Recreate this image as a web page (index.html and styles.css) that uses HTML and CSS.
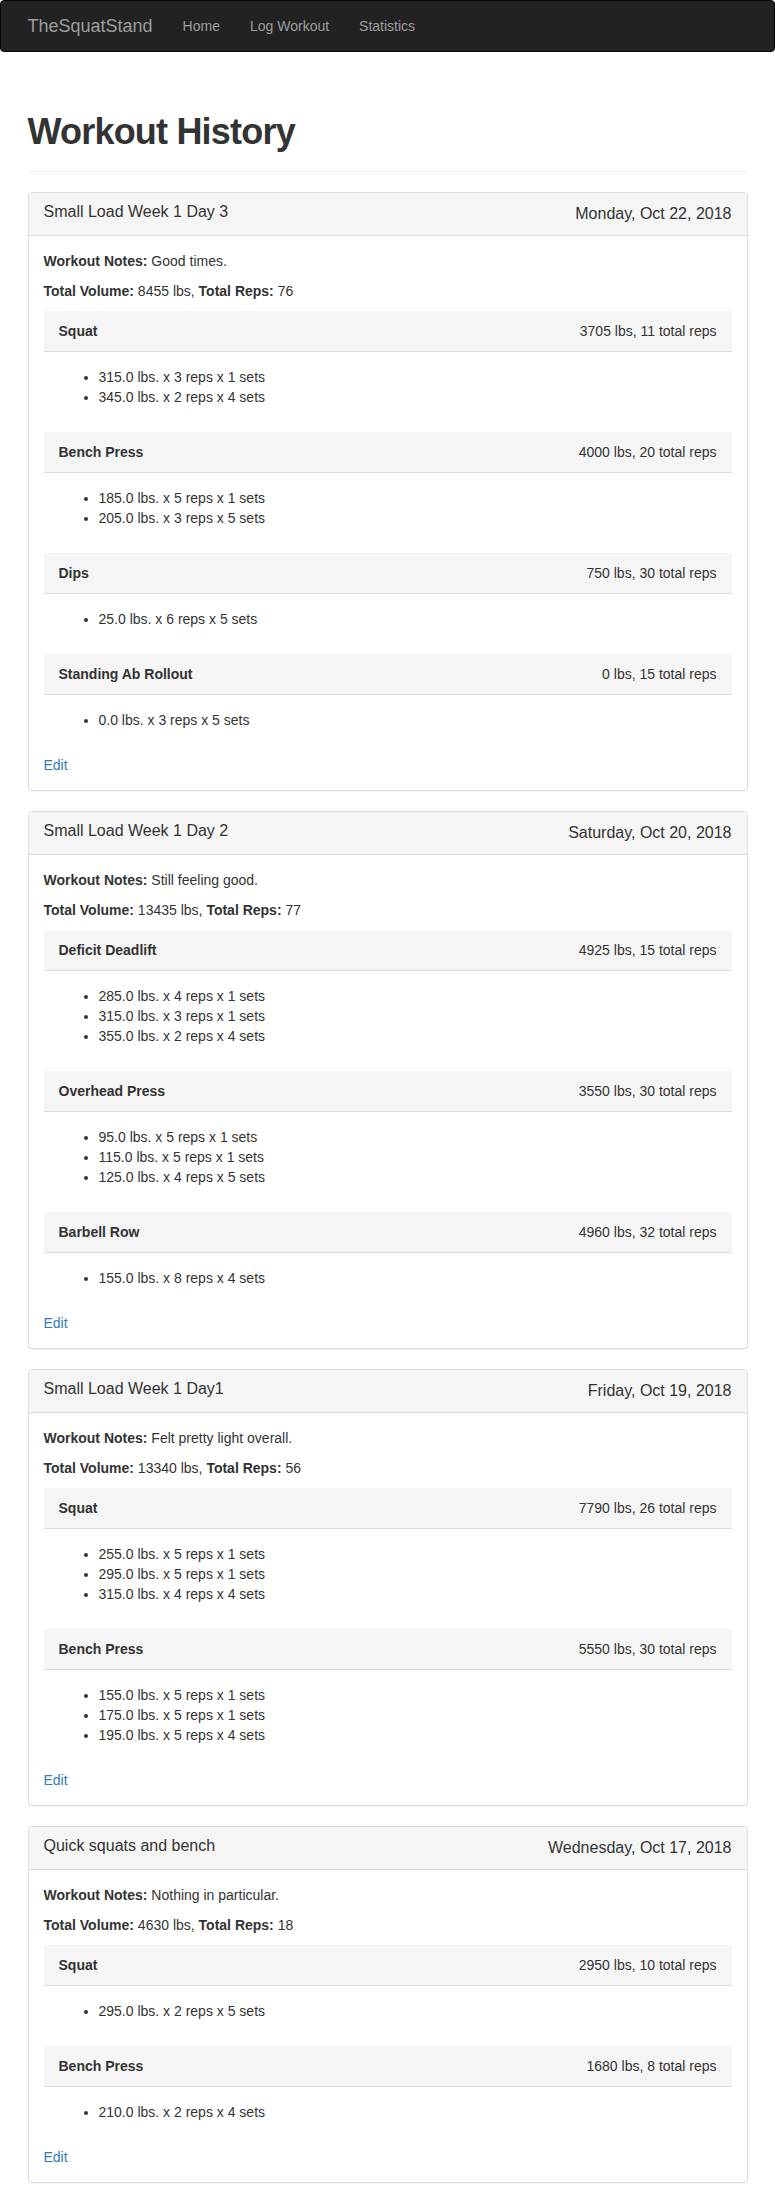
FILE: index.html
```html
<!DOCTYPE html>
<html lang="en">
<head>
<meta charset="utf-8">
<title>TheSquatStand - Workout History</title>
<link rel="stylesheet" href="styles.css">
</head>
<body>
<nav class="navbar">
  <div class="container nav-inner">
    <a class="brand" href="#">TheSquatStand</a>
    <ul class="nav-links">
      <li><a href="#">Home</a></li>
      <li><a href="#">Log Workout</a></li>
      <li><a href="#">Statistics</a></li>
    </ul>
  </div>
</nav>

<div class="container">
  <div class="page-header"><h1>Workout History</h1></div>

  <div class="panel">
    <div class="panel-heading"><h3 class="panel-title">Small Load Week 1 Day 3</h3><span class="panel-date">Monday, Oct 22, 2018</span></div>
    <div class="panel-body">
      <p><strong>Workout Notes:</strong> Good times.</p>
      <p><strong>Total Volume:</strong> 8455 lbs, <strong>Total Reps:</strong> 76</p>
      <div class="ex">
        <div class="ex-heading"><strong>Squat</strong><span>3705 lbs, 11 total reps</span></div>
        <div class="ex-body"><ul><li>315.0 lbs. x 3 reps x 1 sets</li><li>345.0 lbs. x 2 reps x 4 sets</li></ul></div>
      </div>
      <div class="ex">
        <div class="ex-heading"><strong>Bench Press</strong><span>4000 lbs, 20 total reps</span></div>
        <div class="ex-body"><ul><li>185.0 lbs. x 5 reps x 1 sets</li><li>205.0 lbs. x 3 reps x 5 sets</li></ul></div>
      </div>
      <div class="ex">
        <div class="ex-heading"><strong>Dips</strong><span>750 lbs, 30 total reps</span></div>
        <div class="ex-body"><ul><li>25.0 lbs. x 6 reps x 5 sets</li></ul></div>
      </div>
      <div class="ex">
        <div class="ex-heading"><strong>Standing Ab Rollout</strong><span>0 lbs, 15 total reps</span></div>
        <div class="ex-body"><ul><li>0.0 lbs. x 3 reps x 5 sets</li></ul></div>
      </div>
      <a class="edit" href="#">Edit</a>
    </div>
  </div>

  <div class="panel">
    <div class="panel-heading"><h3 class="panel-title">Small Load Week 1 Day 2</h3><span class="panel-date">Saturday, Oct 20, 2018</span></div>
    <div class="panel-body">
      <p><strong>Workout Notes:</strong> Still feeling good.</p>
      <p><strong>Total Volume:</strong> 13435 lbs, <strong>Total Reps:</strong> 77</p>
      <div class="ex">
        <div class="ex-heading"><strong>Deficit Deadlift</strong><span>4925 lbs, 15 total reps</span></div>
        <div class="ex-body"><ul><li>285.0 lbs. x 4 reps x 1 sets</li><li>315.0 lbs. x 3 reps x 1 sets</li><li>355.0 lbs. x 2 reps x 4 sets</li></ul></div>
      </div>
      <div class="ex">
        <div class="ex-heading"><strong>Overhead Press</strong><span>3550 lbs, 30 total reps</span></div>
        <div class="ex-body"><ul><li>95.0 lbs. x 5 reps x 1 sets</li><li>115.0 lbs. x 5 reps x 1 sets</li><li>125.0 lbs. x 4 reps x 5 sets</li></ul></div>
      </div>
      <div class="ex">
        <div class="ex-heading"><strong>Barbell Row</strong><span>4960 lbs, 32 total reps</span></div>
        <div class="ex-body"><ul><li>155.0 lbs. x 8 reps x 4 sets</li></ul></div>
      </div>
      <a class="edit" href="#">Edit</a>
    </div>
  </div>

  <div class="panel">
    <div class="panel-heading"><h3 class="panel-title">Small Load Week 1 Day1</h3><span class="panel-date">Friday, Oct 19, 2018</span></div>
    <div class="panel-body">
      <p><strong>Workout Notes:</strong> Felt pretty light overall.</p>
      <p><strong>Total Volume:</strong> 13340 lbs, <strong>Total Reps:</strong> 56</p>
      <div class="ex">
        <div class="ex-heading"><strong>Squat</strong><span>7790 lbs, 26 total reps</span></div>
        <div class="ex-body"><ul><li>255.0 lbs. x 5 reps x 1 sets</li><li>295.0 lbs. x 5 reps x 1 sets</li><li>315.0 lbs. x 4 reps x 4 sets</li></ul></div>
      </div>
      <div class="ex">
        <div class="ex-heading"><strong>Bench Press</strong><span>5550 lbs, 30 total reps</span></div>
        <div class="ex-body"><ul><li>155.0 lbs. x 5 reps x 1 sets</li><li>175.0 lbs. x 5 reps x 1 sets</li><li>195.0 lbs. x 5 reps x 4 sets</li></ul></div>
      </div>
      <a class="edit" href="#">Edit</a>
    </div>
  </div>

  <div class="panel">
    <div class="panel-heading"><h3 class="panel-title">Quick squats and bench</h3><span class="panel-date">Wednesday, Oct 17, 2018</span></div>
    <div class="panel-body">
      <p><strong>Workout Notes:</strong> Nothing in particular.</p>
      <p><strong>Total Volume:</strong> 4630 lbs, <strong>Total Reps:</strong> 18</p>
      <div class="ex">
        <div class="ex-heading"><strong>Squat</strong><span>2950 lbs, 10 total reps</span></div>
        <div class="ex-body"><ul><li>295.0 lbs. x 2 reps x 5 sets</li></ul></div>
      </div>
      <div class="ex">
        <div class="ex-heading"><strong>Bench Press</strong><span>1680 lbs, 8 total reps</span></div>
        <div class="ex-body"><ul><li>210.0 lbs. x 2 reps x 4 sets</li></ul></div>
      </div>
      <a class="edit" href="#">Edit</a>
    </div>
  </div>
</div>
</body>
</html>
```

FILE: styles.css
```css
* { box-sizing: border-box; }
html, body { margin: 0; padding: 0; }
body {
  font-family: "Liberation Sans", Arial, Helvetica, sans-serif;
  font-size: 14px;
  line-height: 20px;
  color: #333;
  background: #fff;
}
a { text-decoration: none; }

.container {
  max-width: 750px;
  margin: 0 auto;
  padding: 0 15px;
}

/* navbar */
.navbar {
  background: #222;
  border: 1px solid #080808;
  border-radius: 4px;
  min-height: 52px;
  margin-bottom: 20px;
}
.nav-inner {
  display: flex;
  align-items: flex-start;
}
.brand {
  display: block;
  margin-left: -15px;
  padding: 15px;
  height: 50px;
  font-size: 18px;
  line-height: 20px;
  color: #9d9d9d;
}
.nav-links {
  display: flex;
  list-style: none;
  margin: 0;
  padding: 0;
}
.nav-links a {
  display: block;
  padding: 15px;
  line-height: 20px;
  font-size: 14px;
  color: #9d9d9d;
}

/* page header */
.page-header {
  margin: 60px 0 20px;
  padding-bottom: 9px;
  border-bottom: 1px solid #eee;
}
.page-header h1 {
  margin: 0 0 10px;
  font-size: 36px;
  font-weight: 700;
  line-height: 1.1;
  letter-spacing: -0.8px;
}

/* panels */
.panel {
  border: 1px solid #ddd;
  border-radius: 4px;
  margin-bottom: 20px;
  background: #fff;
  box-shadow: 0 1px 1px rgba(0, 0, 0, 0.05);
}
.panel-heading {
  display: flex;
  justify-content: space-between;
  align-items: flex-start;
  padding: 10px 15px;
  background: #f5f5f5;
  border-bottom: 1px solid #ddd;
  border-radius: 3px 3px 0 0;
}
.panel-title {
  margin: 0;
  font-size: 16px;
  font-weight: 500;
  line-height: 1.1;
}
.panel-date {
  font-size: 16px;
  line-height: 22px;
}
.panel-body {
  padding: 15px;
}
.panel-body p {
  margin: 0 0 10px;
}

/* exercise blocks */
.ex {
  border-radius: 4px;
}
.ex-heading {
  display: flex;
  justify-content: space-between;
  padding: 10px 15px;
  background: #f5f5f5;
  border-bottom: 1px solid #ddd;
  border-radius: 3px 3px 0 0;
}
.ex-body {
  padding: 15px;
}
.ex-body ul {
  margin: 0 0 10px;
  padding-left: 40px;
}

.edit {
  display: block;
  width: max-content;
  color: #337ab7;
}
```
